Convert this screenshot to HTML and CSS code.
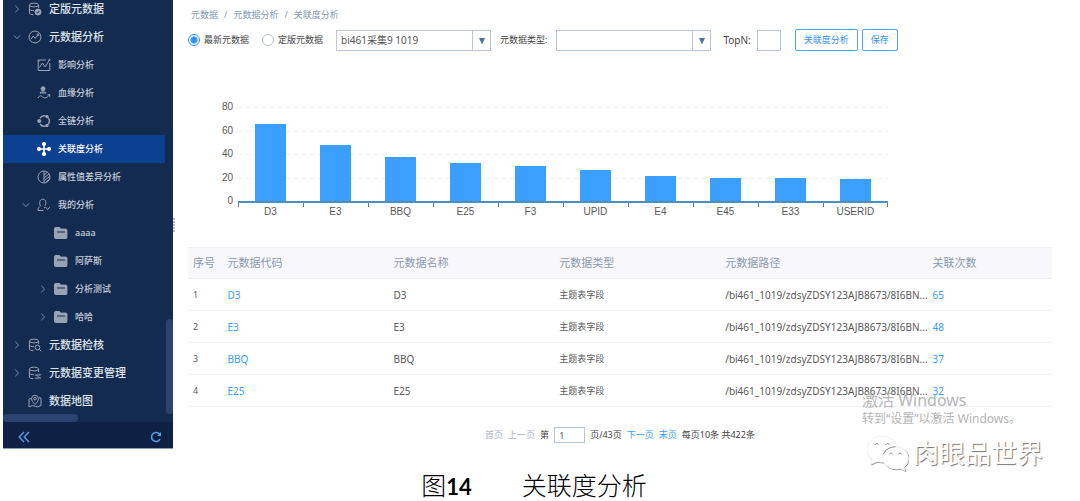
FILE: index.html
```html
<!DOCTYPE html>
<html lang="zh-CN">
<head>
<meta charset="utf-8">
<title>关联度分析</title>
<link rel="stylesheet" href="styles.css">
</head>
<body>
<svg class="defs" aria-hidden="true">
  <symbol id="right" viewBox="0 0 8 8"><path d="M2.3 .8 5.6 4 2.3 7.2"/></symbol>
  <symbol id="down" viewBox="0 0 8 8"><path d="M.8 2.3 4 5.6 7.2 2.3"/></symbol>
  <symbol id="db" viewBox="0 0 14 14"><ellipse cx="6" cy="3" rx="4.6" ry="1.9"/><path d="M1.4 3v8c0 1 1.8 1.6 4 1.7M10.6 3v3M1.4 7c0 1 2 1.7 4.6 1.7"/></symbol>
  <symbol id="folder" viewBox="0 0 14 12"><path class="solid" d="M1.5.5h4l1.2 1.6h5.2c.6 0 1 .4 1 1V10.500c0 .6-.4 1-1 1H1.500c-.6 0-1-.4-1-1v-9c0-.6.4-1 1-1z"/><path class="slot" d="M3 5h8"/></symbol>
</svg>
<div class="app">
  <aside class="sidebar">
    <nav class="tree">
      <ul class="list">
        <li><a class="item top" href="#"><svg class="arrow"><use href="#right"/></svg><svg class="icon" viewBox="0 0 14 14"><use href="#db"/><circle class="solid" cx="10" cy="10" r="3"/><path class="mark" d="m8.600 10 1 1 1.800-2"/></svg>定版元数据</a></li>
        <li><a class="item top" href="#"><svg class="arrow"><use href="#down"/></svg><svg class="icon" viewBox="0 0 14 14"><circle cx="7" cy="7" r="6"/><path d="m3.200 9 2-3 2 2.400 3.200-4M8.600 4.200l2-.2.2 2"/></svg>元数据分析</a></li>
        <li><a class="item sub" href="#"><svg class="icon" viewBox="0 0 14 14"><path d="M9 2H1.200v10.500h11.600V5M2.500 9.500l3-4.500 2.800 4 4-7M.8 2.200l2 1"/><circle cx="12.500" cy="1.800" r=".7"/></svg>影响分析</a></li>
        <li><a class="item sub" href="#"><svg class="icon" viewBox="0 0 14 14"><circle class="solid" cx="6" cy="2.700" r="2"/><path d="M3 7c0-1.500 6-1.500 6 0zM1 12c2-3 3-2.500 4.500-1.200S9 13 12.500 9M10.500 8.800l2.200-.2v2.200"/></svg>血缘分析</a></li>
        <li><a class="item sub" href="#"><svg class="icon" viewBox="0 0 14 14"><path d="M3 4A5.200 5.200 0 0 1 9 2.100M11 3.600a5.200 5.200 0 0 1 0 6.800M9 11.900A5.200 5.200 0 0 1 3 10" stroke-width="1.400"/><circle class="solid" cx="2.300" cy="7" r="1.600"/><circle class="solid" cx="10" cy="2.600" r="1.200"/><circle class="solid" cx="10" cy="11.500" r="1.200"/></svg>全链分析</a></li>
        <li><a class="item sub active" href="#" aria-current="page"><svg class="icon" viewBox="0 0 14 14"><path d="M7 2v10M2 7h10" stroke-width="1.600"/><circle class="solid" cx="7" cy="2" r="1.700"/><circle class="solid" cx="7" cy="12" r="1.700"/><circle class="solid" cx="2" cy="7" r="1.700"/><circle class="solid" cx="12" cy="7" r="1.700"/></svg>关联度分析</a></li>
        <li><a class="item sub" href="#"><svg class="icon" viewBox="0 0 14 14"><circle cx="7" cy="7" r="6"/><path d="M7 1v12M7 5l3-2.500M7 8l5-4M7 11l6-5M9 12l3.500-3"/></svg>属性值差异分析</a></li>
        <li><a class="item mine" href="#"><svg class="arrow"><use href="#down"/></svg><svg class="icon" viewBox="0 0 14 14"><path d="M6.500 12.500H1c0-3 1.300-3.600 2.500-4.500C2 5.500 2.500 1.200 5.800 1.200S9.500 5.500 8 7.800M7 10l1.500-1 2 2.400 2.300-2.200"/></svg>我的分析</a></li>
        <li><a class="item leaf" href="#"><span class="arrow"></span><svg class="icon"><use href="#folder"/></svg>aaaa</a></li>
        <li><a class="item leaf" href="#"><span class="arrow"></span><svg class="icon"><use href="#folder"/></svg>阿萨斯</a></li>
        <li><a class="item leaf" href="#"><svg class="arrow"><use href="#right"/></svg><svg class="icon"><use href="#folder"/></svg>分析测试</a></li>
        <li><a class="item leaf" href="#"><svg class="arrow"><use href="#right"/></svg><svg class="icon"><use href="#folder"/></svg>哈哈</a></li>
        <li><a class="item top" href="#"><svg class="arrow"><use href="#right"/></svg><svg class="icon" viewBox="0 0 14 14"><use href="#db"/><circle cx="9.500" cy="9.500" r="2.400"/><path d="m11.300 11.300 1.900 1.900"/></svg>元数据检核</a></li>
        <li><a class="item top" href="#"><svg class="arrow"><use href="#right"/></svg><svg class="icon" viewBox="0 0 14 14"><use href="#db"/><path d="M7 9h5.500l-1.200-1.200M13 12H7.500l1.200 1.200M8.500 9l3 3"/></svg>元数据变更管理</a></li>
        <li><a class="item top" href="#"><span class="arrow"></span><svg class="icon" viewBox="0 0 14 14"><path d="M3 4.500 1 5.200v7.600l3.500-1.300 5 1.300 3.500-1.300V4l-2-.2M7 10.500C4.500 8 3.600 6.500 3.600 4.700a3.400 3.400 0 0 1 6.800 0C10.400 6.500 9.500 8 7 10.500z"/><circle cx="7" cy="4.700" r="1.300"/></svg>数据地图</a></li>
      </ul>
      <span class="thumb thumb-y"></span>
      <span class="thumb thumb-x"></span>
    </nav>
    <div class="tools">
      <button class="tool" type="button" aria-label="收起"><svg viewBox="0 0 12 12"><path d="M6 1 1.200 6 6 11M11 1 6.200 6 11 11" stroke-width="1.400"/></svg></button>
      <button class="tool" type="button" aria-label="刷新"><svg viewBox="0 0 12 12"><path d="M10 8.200A4.500 4.500 0 1 1 9.400 3" stroke-width="1.600"/><path class="head" d="M11 1v4H7z"/></svg></button>
    </div>
  </aside>
  <div class="splitter"><span></span><span></span><span></span><span></span><span></span></div>
  <main class="main">
    <nav class="crumbs"><a href="#">元数据</a><span>/</span><a href="#">元数据分析</a><span>/</span><a href="#">关联度分析</a></nav>
    <form class="filters">
      <label class="choice"><input class="radio" type="radio" name="version" checked>最新元数据</label>
      <label class="choice"><input class="radio" type="radio" name="version">定版元数据</label>
      <span class="combo"><select class="select" aria-label="版本"><option>bi461采集9 1019</option></select><svg class="caret" viewBox="0 0 8 8"><path d="M1 1h6L4 7.500z"/></svg></span>
      <label class="caption-label" for="kind">元数据类型:</label>
      <span class="combo"><select class="select" id="kind"><option></option></select><svg class="caret" viewBox="0 0 8 8"><path d="M1 1h6L4 7.500z"/></svg></span>
      <label class="caption-label topn" for="topn">TopN:</label>
      <input class="small-input" id="topn" type="text">
      <button class="btn btn-first" type="button">关联度分析</button>
      <button class="btn" type="button">保存</button>
    </form>
    <section class="chart" aria-label="关联次数">
      <div class="scale"><span>80</span><span>60</span><span>40</span><span>20</span><span>0</span></div>
      <div class="plot">
        <div class="grid-lines"><i></i><i></i><i></i><i></i></div>
        <div class="bars">
          <div class="slot-bar"><b style="height:82%"></b></div>
          <div class="slot-bar"><b style="height:60%"></b></div>
          <div class="slot-bar"><b style="height:47%"></b></div>
          <div class="slot-bar"><b style="height:40%"></b></div>
          <div class="slot-bar"><b style="height:37%"></b></div>
          <div class="slot-bar"><b style="height:33%"></b></div>
          <div class="slot-bar"><b style="height:27%"></b></div>
          <div class="slot-bar"><b style="height:25%"></b></div>
          <div class="slot-bar"><b style="height:25%"></b></div>
          <div class="slot-bar"><b style="height:23%"></b></div>
        </div>
        <div class="names"><span>D3</span><span>E3</span><span>BBQ</span><span>E25</span><span>F3</span><span>UPID</span><span>E4</span><span>E45</span><span>E33</span><span>USERID</span></div>
      </div>
    </section>
    <table class="table">
      <colgroup><col class="c-no"><col class="c-text"><col class="c-text"><col class="c-text"><col class="c-path"><col></colgroup>
      <thead><tr><th>序号</th><th>元数据代码</th><th>元数据名称</th><th>元数据类型</th><th>元数据路径</th><th>关联次数</th></tr></thead>
      <tbody>
        <tr><td>1</td><td><a href="#">D3</a></td><td>D3</td><td class="kind">主题表字段</td><td>/bi461_1019/zdsyZDSY123AJB8673/8I6BN...</td><td><a href="#">65</a></td></tr>
        <tr><td>2</td><td><a href="#">E3</a></td><td>E3</td><td class="kind">主题表字段</td><td>/bi461_1019/zdsyZDSY123AJB8673/8I6BN...</td><td><a href="#">48</a></td></tr>
        <tr><td>3</td><td><a href="#">BBQ</a></td><td>BBQ</td><td class="kind">主题表字段</td><td>/bi461_1019/zdsyZDSY123AJB8673/8I6BN...</td><td><a href="#">37</a></td></tr>
        <tr><td>4</td><td><a href="#">E25</a></td><td>E25</td><td class="kind">主题表字段</td><td>/bi461_1019/zdsyZDSY123AJB8673/8I6BN...</td><td><a href="#">32</a></td></tr>
      </tbody>
    </table>
    <div class="pager">
      <span class="off">首页</span><span class="off">上一页</span><label for="page">第</label><input class="page-input" id="page" type="text" value="1"><span>页/43页</span><a href="#">下一页</a><a href="#">末页</a><span>每页10条 共422条</span>
    </div>
  </main>
</div>
<div class="activate"><p class="activate-title">激活 Windows</p><p class="activate-note">转到“设置”以激活 Windows。</p></div>
<div class="account">
  <svg class="bubbles" viewBox="0 0 44 38">
    <g class="shade"><path d="M17 2C8 2 1 8 1 16c0 4.500 2 8 5.500 10.500L5 31l6-3c2 .6 4 .9 6 .9h1"/><path d="M31 13c-7.500 0-13.500 5-13.500 11.500S23.500 36 31 36c1.700 0 3.200-.2 4.700-.7l5 2.500-1.400-4.200c3-2 4.700-5.200 4.700-9C44 18 38.500 13 31 13z"/></g>
    <g class="bubble"><path d="M16 1C7 1 0 7 0 15c0 4.500 2 8 5.500 10.500L4 30l6-3c2 .6 4 .9 6 .9 9 0 16-6 16-13S25 1 16 1z"/><path d="M30 12c-7.500 0-13.500 5-13.500 11.500S22.500 35 30 35c1.700 0 3.200-.2 4.700-.7l5 2.500-1.400-4.200c3-2 4.700-5.200 4.700-9C43 17 37.500 12 30 12z"/></g>
    <path class="shade" d="M17 20c2-5 7-8 13-8"/>
    <path class="eyes" d="M8.500 10c.5-2 3-2 3.500 0M20 10c.5-2 3-2 3.500 0M23.500 20c.5-2 2.700-2 3.200 0M33 20c.5-2 2.700-2 3.200 0"/>
  </svg>
  <span>肉眼品世界</span>
</div>
<p class="caption"><span>图<b>14</b></span><span>关联度分析</span></p>
</body>
</html>
```
FILE: styles.css
```css
* { box-sizing: border-box; }
body {
  margin: 0;
  position: relative;
  background: #fff;
  color: #595959;
  font: 9px/14px "Noto Sans", "Noto Sans CJK SC", sans-serif;
}
a { color: #3b9dff; text-decoration: none; }
p { margin: 0; }
svg { fill: none; stroke: currentColor; }
.defs { position: absolute; width: 0; height: 0; }
.solid { fill: currentColor; }
.app { display: flex; padding-left: 3px; }

.sidebar {
  flex: 0 0 170px;
  display: flex;
  flex-direction: column;
  background: #142b50;
  border-bottom: 1px solid #8d9bb1;
}
.tree { position: relative; flex: 1; overflow: hidden; padding: 0 8px 7px 0; }
.list { list-style: none; margin: -5px 0 0; padding: 0; }
.item {
  display: flex;
  align-items: center;
  height: 28px;
  padding-left: 10px;
  color: #c3cbd8;
  font-size: 9px;
  font-weight: 500;
  white-space: nowrap;
}
.arrow { flex: none; width: 8px; height: 8px; margin-right: 7px; color: #7f8da5; }
.icon { flex: none; width: 14px; height: 14px; margin-right: 7px; color: #98a3b6; }
.top { font-size: 11px; color: #dfe4ec; }
.sub { padding-left: 34px; }
.mine { padding-left: 19px; }
.leaf { padding-left: 36px; }
.leaf .icon { height: 12px; }
.active { background: #0c4091; color: #fff; }
.active .icon { color: #fff; }
.slot, .mark { stroke: #142b50; }
.thumb { position: absolute; background: #2a4370; border-radius: 4px; }
.thumb-y { right: 0; bottom: 8px; width: 7px; height: 95px; }
.thumb-x { left: 0; bottom: 0; width: 75px; height: 8px; }
.tools {
  display: flex;
  justify-content: space-between;
  align-items: center;
  height: 26px;
  padding: 4px 11px 0 15px;
  background: #0e2144;
}
.tool { display: flex; padding: 0; border: 0; background: none; color: #5c9de2; }
.tool svg { width: 12px; height: 12px; }
.head { fill: currentColor; stroke: none; }
.splitter {
  display: flex;
  flex-direction: column;
  justify-content: center;
  gap: 1px;
  width: 3px;
}
.splitter span { width: 2px; height: 2px; background: #b5b9c2; }

.main { flex: 1; min-width: 0; padding: 8px 28px 0 12px; }
.crumbs { display: flex; gap: 6px; padding-left: 3px; color: #8698b3; }
.crumbs a { color: #8698b3; }
.filters { display: flex; align-items: center; margin-top: 7px; height: 22px; white-space: nowrap; color: #444; }
.choice { display: flex; align-items: center; gap: 4px; margin-right: 13px; }
.radio {
  appearance: none;
  width: 12px;
  height: 12px;
  margin: 0;
  border: 1px solid #b9c2d0;
  border-radius: 50%;
}
.radio:checked { border-color: #2f93ff; background: radial-gradient(#2f93ff 3px, #fff 4px); }
.combo { position: relative; flex: 0 1 155px; display: flex; }
.select {
  appearance: none;
  width: 100%;
  height: 21px;
  padding: 0 20px 0 4px;
  border: 1px solid #b9c5da;
  border-radius: 0;
  background: linear-gradient(#b9c5da, #b9c5da) right 17px top / 1px 100% no-repeat #fff;
  color: #555;
  font: 10px/14px "Noto Sans", "Noto Sans CJK SC", sans-serif;
}
.caret { position: absolute; right: 5px; top: 7px; width: 8px; height: 8px; fill: #4f7398; stroke: none; pointer-events: none; }
.caption-label { margin: 0 9px 0 9px; }
.topn { margin: 0 6px 0 12px; font-size: 10px; }
.small-input { width: 24px; height: 21px; padding: 0 4px; border: 1px solid #b9c5da; font: inherit; }
.btn {
  height: 22px;
  padding: 0 8px;
  margin-left: 4px;
  border: 1px solid #4ba3fb;
  border-radius: 2px;
  background: #fff;
  color: #2f93ff;
  font: inherit;
}
.btn-first { margin-left: 14px; }

.chart {
  display: flex;
  margin: 49px 19% 0 0;
  font-family: "Liberation Sans", Arial, sans-serif;
  font-size: 10px;
}
.scale {
  display: flex;
  flex-direction: column;
  justify-content: space-between;
  width: 45px;
  height: 108px;
  text-align: right;
}
.plot { position: relative; flex: 1; margin-left: 5px; padding-top: 7px; }
.grid-lines { position: absolute; inset: 7px 0 auto; display: flex; flex-direction: column; height: 94px; }
.grid-lines i { flex: 1; background: linear-gradient(90deg, #efefef 5px, transparent 5px) 0 0 / 8px 1px repeat-x; }
.bars { position: relative; display: flex; height: 96px; border-bottom: 2px solid #4a8fbd; }
.slot-bar { flex: 1; display: flex; align-items: flex-end; justify-content: center; }
.slot-bar b { width: 48%; background: #3a9fff; }
.names { display: flex; }
.names span {
  flex: 1 1 0;
  padding-top: 2px;
  text-align: center;
  background: linear-gradient(#777, #777) 0 0 / 1px 4px no-repeat;
}
.names span:last-child { background: linear-gradient(#777, #777) 0 0 / 1px 4px no-repeat, linear-gradient(#777, #777) 100% 0 / 1px 4px no-repeat; }

.table { width: 100%; margin-top: 28px; table-layout: fixed; border-collapse: collapse; }
.c-no { width: 4%; }
.c-text { width: 19.2%; }
.c-path { width: 24%; }
.table th, .table td { height: 32px; padding: 0 5px; border-bottom: 1px solid #eef0f5; text-align: left; white-space: nowrap; }
.table td { font-size: 10px; }
.table td:first-child, .table .kind { font-size: 9px; }
.table th {
  height: 31px;
  border-top: 1px solid #eef0f5;
  background: #f7f7fc;
  color: #8b99ad;
  font-size: 11px;
  font-weight: 400;
}
.pager { display: flex; justify-content: center; align-items: center; gap: 5px; margin-top: 20px; color: #444; }
.off { color: #a9b3c2; }
.page-input { width: 31px; height: 16px; padding: 0 4px; border: 1px solid #b9c5da; color: #555; font: inherit; }

.activate { position: absolute; top: 390px; right: 58px; width: 160px; color: #a9a9a9; white-space: nowrap; opacity: .85; }
.activate-title { font-size: 16px; line-height: 20px; }
.activate-note { font-size: 12px; line-height: 18px; }
.account {
  position: absolute;
  top: 433px;
  right: 37px;
  display: flex;
  align-items: center;
  gap: 4px;
  color: #fff;
  font-size: 26px;
  line-height: 40px;
  text-shadow: 1px 1px 1px #777;
}
.bubbles { width: 42px; height: 37px; }
.shade { stroke: #8c8c8c; }
.bubble { fill: #fff; stroke: #eee; }
.eyes { stroke: #888; }
.caption {
  display: flex;
  justify-content: center;
  gap: 50px;
  padding: 21px 12px 0 0;
  color: #000;
  font-family: "Noto Sans CJK SC", sans-serif;
  font-size: 25px;
  font-weight: 300;
  line-height: 28px;
}
.caption b { font-family: Lato, sans-serif; font-size: 22px; font-weight: 700; }
```
